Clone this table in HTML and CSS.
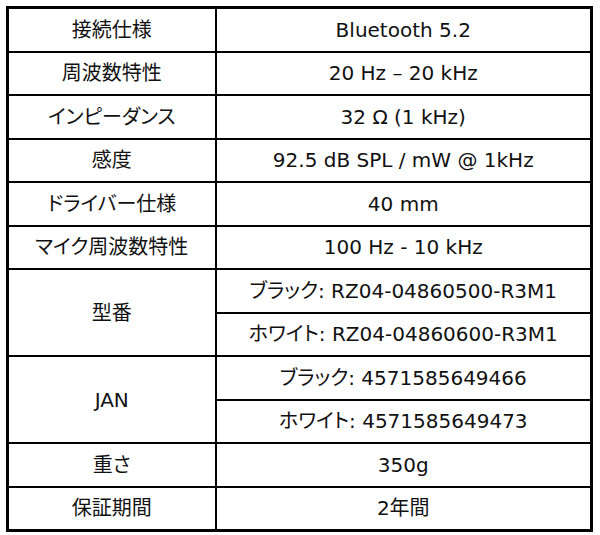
FILE: index.html
```html
<!DOCTYPE html>
<html lang="ja">
<head>
<meta charset="utf-8">
<title>仕様</title>
<link rel="stylesheet" href="styles.css">
</head>
<body>
<div class="page">
<table class="spec">
  <colgroup><col class="c-label"><col class="c-value"></colgroup>
  <tbody>
    <tr><th>接続仕様</th><td>Bluetooth 5.2</td></tr>
    <tr><th>周波数特性</th><td>20 Hz – 20 kHz</td></tr>
    <tr><th>インピーダンス</th><td>32 Ω (1 kHz)</td></tr>
    <tr><th>感度</th><td>92.5 dB SPL / mW @ 1kHz</td></tr>
    <tr><th>ドライバー仕様</th><td>40 mm</td></tr>
    <tr><th>マイク周波数特性</th><td>100 Hz - 10 kHz</td></tr>
    <tr><th rowspan="2">型番</th><td>ブラック: RZ04-04860500-R3M1</td></tr>
    <tr><td>ホワイト: RZ04-04860600-R3M1</td></tr>
    <tr><th rowspan="2">JAN</th><td>ブラック: 4571585649466</td></tr>
    <tr><td>ホワイト: 4571585649473</td></tr>
    <tr><th>重さ</th><td>350g</td></tr>
    <tr><th>保証期間</th><td>2年間</td></tr>
  </tbody>
</table>
</div>
</body>
</html>
```

FILE: styles.css
```css
html, body {
  margin: 0;
  padding: 0;
  background: #fff;
}
.page {
  padding: 6px 0 0 6px;
}
.spec {
  border-collapse: collapse;
  width: 587px;
  table-layout: fixed;
  font-family: "DejaVu Sans", "Noto Sans CJK JP", sans-serif;
  font-size: 20px;
  font-feature-settings: "palt";
  color: #111;
  border: 3px solid #000;
}
.c-label { width: 208px; }
.c-value { width: auto; }
.spec th,
.spec td {
  border: 2px solid #000;
  height: 41.5px;
  padding: 0;
  text-align: center;
  vertical-align: middle;
  font-weight: normal;
  white-space: nowrap;
  line-height: 1;
}
```
